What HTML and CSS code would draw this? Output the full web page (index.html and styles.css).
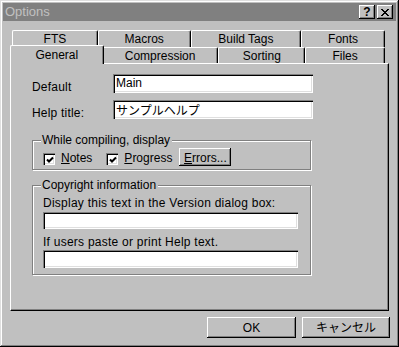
FILE: index.html
```html
<!DOCTYPE html>
<html lang="en">
<head>
    <meta charset="UTF-8">
    <title>Options</title>
    <link rel="stylesheet" href="styles.css">
</head>
<body>

    <div class="window">
        <!-- Title bar (inactive) -->
        <div class="titlebar">
            <span class="title">Options</span>
            <div class="cap-btns">
                <div class="cap-btn">?</div>
                <div class="cap-btn">
                    <svg width="8" height="7" viewBox="0 0 8 7">
                        <path d="M0 0h2v1h1v1h2v-1h1v-1h2v1h-1v1h-1v1h-1v1h1v1h1v1h1v1h-2v-1h-1v-1h-2v1h-1v1h-2v-1h1v-1h1v-1h1v-1h-1v-1h-1v-1h-1z" fill="#000"/>
                    </svg>
                </div>
            </div>
        </div>

        <div class="client">
            <!-- Tabs -->
            <div class="tab-row back">
                <div class="tab t-fts">FTS</div>
                <div class="tab t-macros">Macros</div>
                <div class="tab t-build">Build Tags</div>
                <div class="tab t-fonts">Fonts</div>
            </div>
            <div class="tab-row front">
                <div class="tab t-general selected">General</div>
                <div class="tab t-compression">Compression</div>
                <div class="tab t-sorting">Sorting</div>
                <div class="tab t-files">Files</div>
            </div>

            <!-- Page -->
            <div class="panel">
                <div class="form-row">
                    <label class="row-label" for="def">Default</label>
                    <input class="field wide" id="def" type="text" value="Main" readonly>
                </div>
                <div class="form-row">
                    <label class="row-label" for="title">Help title:</label>
                    <input class="field wide" id="title" type="text" value="サンプルヘルプ" readonly>
                </div>

                <fieldset class="group g-compile">
                    <legend>While compiling, display</legend>
                    <div class="check-row">
                        <span class="check"><svg width="8" height="8" viewBox="0 0 8 8"><path d="M1 3.5l2 2l4-4" fill="none" stroke="#000" stroke-width="2"/></svg></span>
                        <span class="check-label"><u>N</u>otes</span>
                        <span class="check second"><svg width="8" height="8" viewBox="0 0 8 8"><path d="M1 3.5l2 2l4-4" fill="none" stroke="#000" stroke-width="2"/></svg></span>
                        <span class="check-label"><u>P</u>rogress</span>
                        <button class="btn errors"><u>E</u>rrors...</button>
                    </div>
                </fieldset>

                <fieldset class="group g-copy">
                    <legend>Copyright information</legend>
                    <label class="field-label" for="ver">Display this text in the Version dialog box:</label>
                    <input class="field narrow" id="ver" type="text" readonly>
                    <label class="field-label second" for="paste">If users paste or print Help text.</label>
                    <input class="field narrow tall" id="paste" type="text" readonly>
                </fieldset>
            </div>

            <!-- Dialog buttons -->
            <div class="actions">
                <button class="btn ok">OK</button>
                <button class="btn cancel">キャンセル</button>
            </div>
        </div>
    </div>

</body>
</html>
```

FILE: styles.css
```css
/* Reset */
* {
    margin: 0;
    padding: 0;
    box-sizing: border-box;
}

body {
    font-family: "Liberation Sans", "Noto Sans CJK JP", sans-serif;
    font-size: 12px;
    line-height: 14px;
    color: #000;
    background: #c0c0c0;
}

/* Window frame */
.window {
    width: 399px;
    height: 347px;
    padding: 3px;
    background: #c0c0c0;
    box-shadow: inset -1px -1px #000, inset 1px 1px #dfdfdf,
                inset -2px -2px #808080, inset 2px 2px #fff;
}

.titlebar {
    height: 18px;
    background: #808080;
    display: flex;
    justify-content: space-between;
    align-items: center;
    padding: 0 3px 0 2px;
}

.title {
    color: #c0c0c0;
    font-size: 13px;
}

.cap-btns {
    display: flex;
    gap: 2px;
}

.cap-btn {
    width: 16px;
    height: 14px;
    background: #c0c0c0;
    box-shadow: inset -1px -1px #000, inset 1px 1px #fff, inset -2px -2px #808080;
    display: flex;
    justify-content: center;
    align-items: center;
    font-weight: bold;
    font-size: 12px;
}

/* Client area */
.client {
    padding: 9px 7px 0 7px;
}

/* Tabs */
.tab-row {
    display: flex;
    margin: 0 4px 0 2px;
}

.tab-row.back {
    height: 17px;
}

.tab-row.front {
    height: 16px;
    align-items: flex-end;
}

.tab {
    height: 100%;
    background: #c0c0c0;
    text-align: center;
    padding-top: 1px;
    border-top: 1px solid #fff;
    border-left: 1px solid #fff;
    border-right: 1px solid #000;
    border-radius: 2px 2px 0 0;
    box-shadow: inset -1px 0 #808080;
}

.t-fts { width: 86px; }
.t-macros { width: 93px; }
.t-build { width: 111px; }
.t-fonts { width: 84px; }
.t-general { width: 90px; }
.t-compression { width: 117px; }
.t-sorting { width: 87px; }
.t-files { width: 80px; }

.tab.selected {
    position: relative;
    z-index: 1;
    width: 94px;
    height: 19px;
    margin: 0 -2px -1px -2px;
    padding-top: 2px;
}

/* Page panel */
.panel {
    height: 248px;
    padding: 10px 0 0 21px;
    border-top: 1px solid #fff;
    border-left: 1px solid #fff;
    border-right: 1px solid #000;
    border-bottom: 1px solid #000;
    box-shadow: inset -1px -1px #808080;
}

.form-row {
    display: flex;
}

.form-row + .form-row {
    margin-top: 6px;
}

.row-label {
    width: 81px;
    padding-top: 6px;
    letter-spacing: 0.2px;
}

.field {
    font: inherit;
    height: 19px;
    padding: 0 3px 1px;
    background: #fff;
    border: none;
    outline: none;
    box-shadow: inset 1px 1px #808080, inset 2px 2px #000,
                inset -1px -1px #fff, inset -2px -2px #dfdfdf;
}

.field.wide {
    width: 200px;
}

.field.narrow {
    display: block;
    width: 255px;
    height: 17px;
    margin-top: 2px;
}

.field.narrow.tall {
    height: 18px;
    margin-top: 1px;
}

/* Group boxes */
.group {
    width: 279px;
    border: 1px solid #808080;
    box-shadow: inset 1px 1px #fff, 1px 1px #fff;
    padding: 0 0 0 10px;
}

.group legend {
    margin-left: -2px;
    padding: 0 2px 0 1px;
    background: #c0c0c0;
    line-height: 14px;
}

.g-compile {
    margin-top: 13px;
    padding-top: 1px;
    padding-bottom: 3px;
}

.g-copy {
    margin-top: 8px;
    padding-top: 4px;
    padding-bottom: 6px;
}

.check-row {
    display: flex;
    align-items: flex-end;
}

.check {
    width: 12px;
    height: 12px;
    margin-bottom: 1px;
    background: #fff;
    display: flex;
    justify-content: center;
    align-items: center;
    padding: 1px 0 0 1px;
    box-shadow: inset 1px 1px #808080, inset 2px 2px #000,
                inset -1px -1px #fff, inset -2px -2px #dfdfdf;
}

.check.second {
    margin-left: 14px;
}

.check-label {
    margin-left: 6px;
    margin-bottom: 1px;
}

.btn {
    font: inherit;
    color: #000;
    background: #c0c0c0;
    border: none;
    box-shadow: inset -1px -1px #000, inset 1px 1px #fff, inset -2px -2px #808080;
}

.btn.errors {
    width: 52px;
    height: 18px;
    margin-left: 7px;
    padding-top: 1px;
}

.field-label {
    display: block;
    letter-spacing: 0.25px;
}

.field-label.second {
    margin-top: 6px;
}

/* Dialog buttons */
.actions {
    display: flex;
    justify-content: flex-end;
    gap: 6px;
    margin: 6px -1px 0 0;
}

.btn.ok {
    width: 89px;
    height: 21px;
}

.btn.cancel {
    width: 88px;
    height: 21px;
}
```
